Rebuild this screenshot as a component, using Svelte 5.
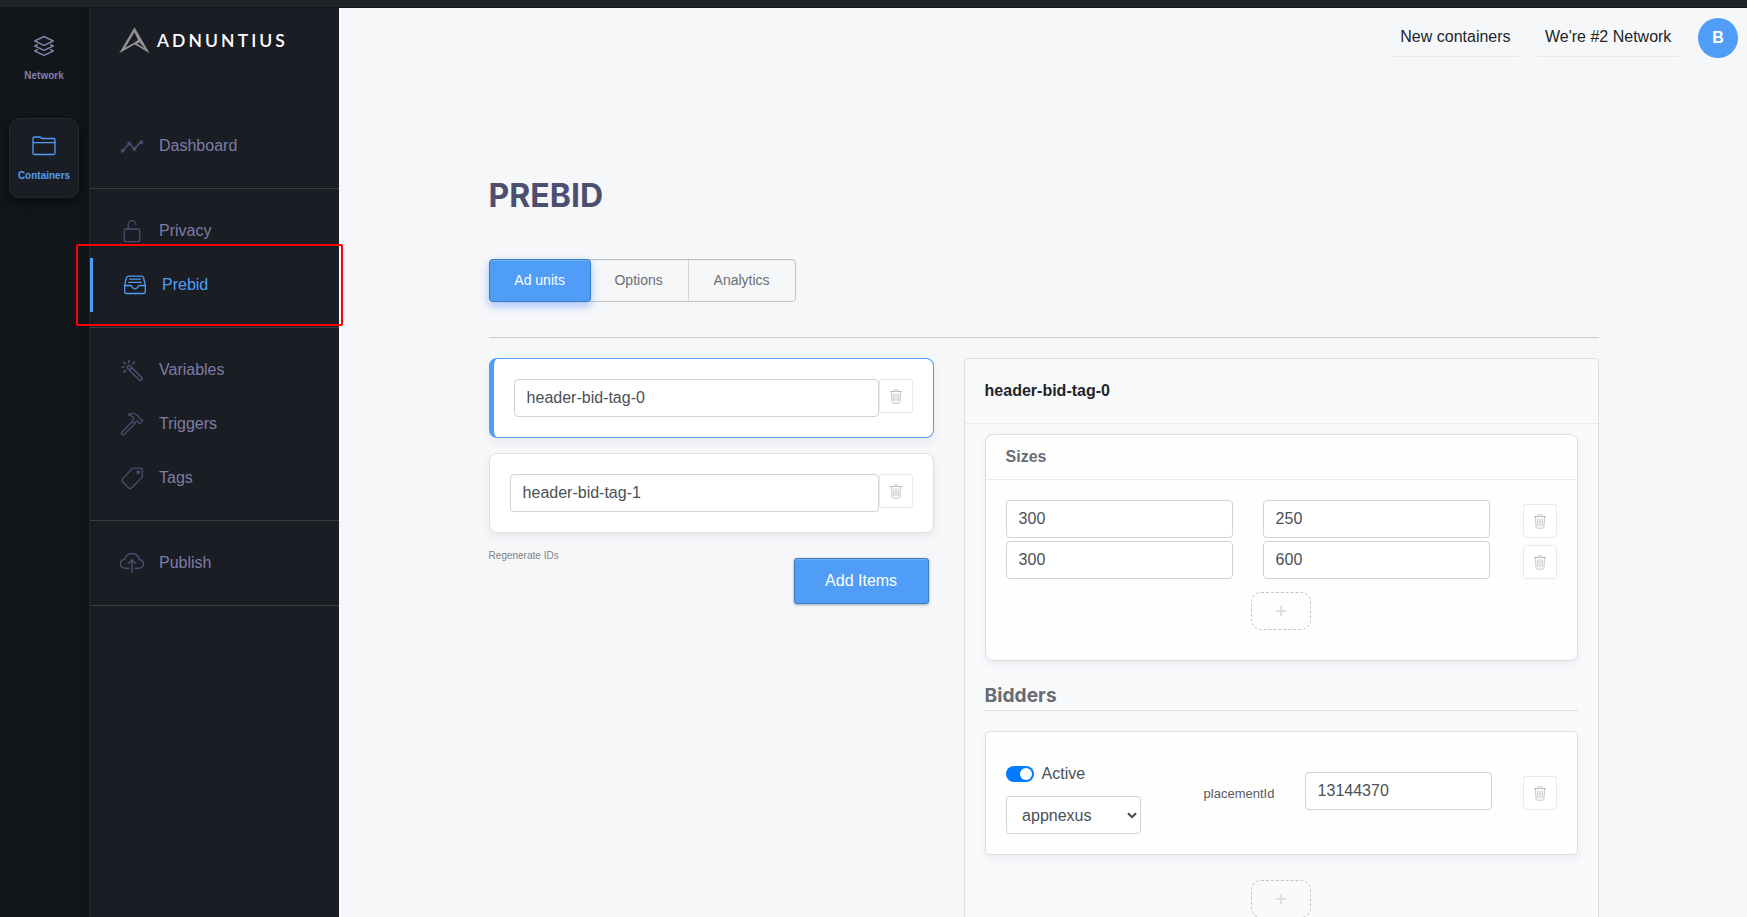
<script>
  const sections = [
    [{ label: 'Dashboard', icon: 'chart' }],
    [{ label: 'Privacy', icon: 'lock' }, { label: 'Prebid', icon: 'inbox', active: true }],
    [{ label: 'Variables', icon: 'wand' }, { label: 'Triggers', icon: 'hammer' }, { label: 'Tags', icon: 'tag' }],
    [{ label: 'Publish', icon: 'cloud' }]
  ];
  const units = [
    { name: 'header-bid-tag-0', selected: true },
    { name: 'header-bid-tag-1', selected: false }
  ];
  const sizes = [[300, 250], [300, 600]];
</script>

{#snippet trash()}
  <button class="trash" aria-label="Delete">
    <svg width="12" height="15" viewBox="0 0 12 15" fill="none">
      <path d="M0 2.5h12" stroke="#b9bbbf" />
      <path d="M3.6 2.3C3.8 1 4.3.6 5 .6h2c.7 0 1.200.4 1.400 1.700" stroke="#c3c5c8" />
      <path d="M1.500 3l.5 9.700c.1 1 .6 1.500 1.500 1.500h5c.9 0 1.400-.5 1.500-1.500l.5-9.700" stroke="#c3c5c8" />
      <path d="M3.500 4.500v7.800M5.200 4.500v7.800M6.800 4.500v7.800M8.500 4.500v7.800" stroke="#cfd0d3" />
    </svg>
  </button>
{/snippet}

{#snippet plus()}
  <button class="plus" aria-label="Add">
    <svg width="10" height="10" viewBox="0 0 10 10"><path d="M0 5h10M5 0v10" stroke="#dedfe1" stroke-width="2" /></svg>
  </button>
{/snippet}

{#snippet icon(name)}
  <svg class="icon" width="24" height="24" viewBox="0 0 24 24" fill="none" stroke="currentColor" stroke-width="1.300" stroke-linejoin="round" stroke-linecap="round">
    {#if name === 'chart'}
      <g stroke-width="1.600"><path d="M3.700 15.700 8.300 10.500M10.200 10.300l3.200 3.800M15.400 13.800l4.900-5.400" />
      <circle cx="2.700" cy="16.700" r="1.200" /><circle cx="9.300" cy="9.600" r="1.200" /><circle cx="14.400" cy="14.900" r="1.200" /><circle cx="21.300" cy="8.200" r="1.200" /></g>
    {:else if name === 'lock'}
      <rect x="4.200" y="10" width="15.600" height="12.600" rx="2" />
      <path d="M8.200 10V5.600a3.900 3.900 0 0 1 7.800 0" />
    {:else if name === 'inbox'}
      <g transform="translate(0 -.5)"><path d="M1.700 12.500 3.500 5.200C3.800 4 4.300 3.600 5.500 3.600h13c1.200 0 1.700.4 2 1.600l1.800 7.300v6.800c0 1-.7 1.700-1.700 1.700H3.400c-1 0-1.700-.7-1.700-1.700z" />
      <path d="M1.700 13h5.800c.8 0 1.200.5 1.500 1.300.5 1.200 1.500 2 3 2s2.500-.8 3-2c.3-.8.7-1.300 1.500-1.300h5.800M6.500 6.700h11M5.700 9.800h12.600" /></g>
    {:else if name === 'wand'}
      <path d="M7.800 10.500a1.700 1.700 0 0 1 2.400-2.400L21.500 19.300a1.700 1.700 0 0 1-2.500 2.500zM11.800 9.800l-2.300 2.300" stroke-width="1.500" />
      <path d="M9 2.200v2.500M3.900 4.100l1.600 1.600M14.400 3.900l-1.800 1.800M1.800 9h2.700M5.500 12.600l-1.500 1.500" stroke-width="1.600" />
    {:else if name === 'hammer'}
      <path d="M12.500 9.500 1.700 20.300c-.5.500-.5 1 0 1.400l.9.900c.4.400.9.400 1.400 0L15 11.800" />
      <path d="M8.200 2.600c3.500-1.800 7.300-1.100 9.500 1.100l1.300 1.300c.6.700.4 1.600 1 2.100s1.200.1 1.600.4l1.200 1.100-2.900 3.300-1.400-1.100c-.4-.4-.1-1.100-.7-1.500-.7-.4-1.400-.1-2 .4l-1.500 1.700-2.200-2.100 1.300-1.500c.9-1.600-1.300-4.600-5.200-5.200z" />
    {:else if name === 'tag'}
      <path d="M13.200 2.100h8c.7 0 1 .3 1 1v7.500c0 .6-.1.900-.5 1.300L11 22.200c-.7.600-1.200.6-1.800 0l-7-7c-.6-.6-.6-1.200 0-1.800L12 2.700c.3-.4.700-.6 1.200-.6z" />
      <circle cx="18.200" cy="6.200" r="1.200" fill="currentColor" />
    {:else}
      <path d="M9 17.200H5A4.300 4.300 0 0 1 4.600 8.400C5.600 4.500 8.500 2.400 12 2.400c3.700 0 6.500 2.400 7 6.200 2.500.3 4.300 1.900 4.300 4.300 0 2.500-1.900 4.300-4.300 4.300h-4M12 21.600V9.200M8.500 12.300 12 8.800l3.500 3.500" stroke-width="1.500" />
    {/if}
  </svg>
{/snippet}

<div class="screen">
  <div class="topbar"></div>
  <div class="layout">
    <aside class="rail">
      <div class="rail-item">
        <svg width="22" height="22" viewBox="0 0 22 22" fill="none" stroke="currentColor" stroke-width="1.400" stroke-linejoin="round">
          <path d="M11 1.500 20.300 6 11 10.400 1.700 6z" />
          <path d="M4.800 9.500 1.700 11 11 15.300 20.300 11l-3.100-1.500M4.800 14.500 1.700 16 11 20.300 20.300 16l-3.100-1.500" />
        </svg>
        <span>Network</span>
      </div>
      <div class="rail-item current">
        <svg width="24" height="22" viewBox="0 0 24 22" fill="none" stroke="currentColor" stroke-width="1.300" stroke-linejoin="round">
          <path d="M1 18V3.500C1 2.300 1.500 2 2.500 2h5c1.500 0 1.300 1.500 3 1.500h11c1 0 1.500.5 1.500 1.500v13c0 1-.5 1.500-1.500 1.500h-19C1.500 19.500 1 19 1 18zM1 7.700h22" />
        </svg>
        <span>Containers</span>
      </div>
    </aside>

    <nav class="sidebar">
      <div class="brand">
        <svg width="32" height="28" viewBox="0 0 32 28" fill="#929292">
          <path fill-rule="evenodd" d="M15.500.3 30.600 26.300 19 19.300 15.400 17.600.2 26.300zM15.400 5.200 6.200 20.700l9.700-5.400 3-2.200zM20.400 15.200l-2.200 1.600 2.100 1.200 5.300 3.200z" />
        </svg>
        <span>ADNUNTIUS</span>
      </div>
      <div class="menu">
        {#each sections as items}
          <div class="group">
            {#each items as item}
              <div class="item" class:active={item.active}>
                {@render icon(item.icon)}
                <span>{item.label}</span>
              </div>
            {/each}
          </div>
        {/each}
      </div>
    </nav>

    <main>
      <header>
        <span class="crumb first">New containers</span>
        <span class="crumb second">We're #2 Network</span>
        <span class="avatar">B</span>
      </header>
      <div class="content">
        <h1>PREBID</h1>
        <div class="tabs">
          <button class="tab on">Ad units</button>
          <button class="tab options">Options</button>
          <button class="tab analytics">Analytics</button>
        </div>
        <hr />
        <div class="columns">
          <section class="units">
            {#each units as unit}
              <div class="unit" class:selected={unit.selected}>
                <input value={unit.name} />
                {@render trash()}
              </div>
            {/each}
            <div class="unit-actions">
              <span class="regen">Regenerate IDs</span>
              <button class="add">Add Items</button>
            </div>
          </section>

          <section class="panel">
            <div class="panel-head">header-bid-tag-0</div>
            <div class="panel-body">
              <div class="card sizes">
                <div class="card-head">Sizes</div>
                <div class="card-body">
                  {#each sizes as [w, h]}
                    <div class="size-row">
                      <input value={w} />
                      <input value={h} />
                      {@render trash()}
                    </div>
                  {/each}
                  <div class="plus-row in-card">{@render plus()}</div>
                </div>
              </div>
              <h2>Bidders</h2>
              <div class="card bidder">
                <div class="bidder-left">
                  <div class="switch"><i></i><span>Active</span></div>
                  <div class="select">
                    <span>appnexus</span>
                    <svg width="10" height="7" viewBox="0 0 10 7" fill="none" stroke="#41464c" stroke-width="2"><path d="M1 1.200l4 4 4-4" /></svg>
                  </div>
                </div>
                <span class="param">placementId</span>
                <input class="placement" value="13144370" />
                {@render trash()}
              </div>
              <div class="plus-row">{@render plus()}</div>
            </div>
          </section>
        </div>
      </div>
    </main>
  </div>
  <div class="highlight"></div>
</div>

<style>
  :global(body) { margin: 0; overflow: hidden; }
  .screen, .screen * { box-sizing: border-box; }
  .screen {
    position: relative;
    display: flex;
    flex-direction: column;
    height: 917px;
    overflow: hidden;
    background: #f6f7f9;
    color: #212529;
    font: 16px/24px "Liberation Sans", Arial, sans-serif;
  }
  button, input { font: inherit; margin: 0; }
  svg { display: block; flex: none; }

  .topbar { height: 8px; flex: none; background: #212427; border-bottom: 1px solid #17181b; }
  .layout { display: flex; flex: 1; min-height: 0; }

  .rail {
    width: 90px;
    flex: none;
    padding: 10px 10px 0 9px;
    background: linear-gradient(90deg, #121519, #13161a 80%, #111317);
    border-right: 1px solid #24272b;
  }
  .rail-item {
    display: flex;
    flex-direction: column;
    align-items: center;
    width: 70px;
    height: 80px;
    padding-top: 16px;
    color: #8180aa;
    font-size: 10px;
    font-weight: 700;
    line-height: 12px;
    border: 1px solid transparent;
    border-radius: 10px;
  }
  .rail-item span { margin-top: 13px; }
  .rail-item.current {
    margin-top: 20px;
    color: #4f9df6;
    background: #1b1d24;
    border-color: #26282d;
    box-shadow: 0 4px 12px rgba(0, 0, 0, .5);
  }

  .sidebar { width: 249px; flex: none; background: #1b1d24; }
  .brand { display: flex; align-items: center; height: 111px; padding: 0 0 45px 29px; }
  .brand span {
    margin-left: 6px;
    color: #fff;
    font: 600 17.500px/24px Lato, sans-serif;
    letter-spacing: 3.100px;
  }
  .group { padding-bottom: 15px; border-bottom: 1px solid #3b3d42; }
  .group + .group { padding-top: 15px; }
  .item { display: flex; align-items: center; height: 54px; padding-left: 30px; color: #7d7ca6; }
  .item .icon { color: #4d4c6e; }
  .item span { margin-left: 15px; }
  .item.active { color: #4f9df6; border-left: 3px solid #4f9df6; }
  .item.active .icon { color: #4f9df6; }

  main { flex: 1; min-width: 0; }
  header { display: flex; justify-content: flex-end; height: 82px; padding: 8px 9px 0 0; }
  .crumb { height: 41px; padding-top: 9px; border-bottom: 1px solid #e6e7ed; white-space: nowrap; }
  .first { width: 125px; padding-left: 7.300px; margin-right: 20px; }
  .second { width: 140px; padding-left: 7px; margin-right: 20px; }
  .avatar {
    display: flex;
    align-items: center;
    justify-content: center;
    width: 40px;
    height: 40px;
    margin-top: 2px;
    border-radius: 50%;
    background: #4f9df6;
    color: #fff;
    font-weight: 700;
  }
  .content { width: 1110px; margin-left: 149.600px; }
  h1 { margin: 0; padding-top: 86px; height: 169px; color: #4d4e70; font: 700 32px/40px Inter, sans-serif; }

  .tabs { display: flex; width: 307px; height: 43px; border: 1px solid #c0c3c5; border-radius: 4px; box-shadow: inset 0 1px 1px rgba(0, 0, 0, .04); }
  .tab { padding: 0 0 2px; border: 0; background: none; color: #6b6e72; font-size: 14px; }
  .tab.on {
    width: 102px;
    margin: -1px 0 -1px -1px;
    color: #fff;
    background: #4f9df6;
    border: 1px solid #3a7cc4;
    border-radius: 4px;
    box-shadow: inset 0 1px 0 #76b2f8, 0 4px 10px rgba(79, 140, 246, .5);
  }
  .options { width: 98px; padding-right: 1px; border-right: 1px solid #d4d6d8; }
  .analytics { flex: 1; }
  hr { margin: 35px 0 20px; border: 0; border-top: 1px solid #cfd1d3; }

  .columns { display: flex; gap: 30px; }
  .units { width: 445px; }
  .unit {
    display: flex;
    height: 80px;
    margin-bottom: 15px;
    padding: 20px 20px 0;
    background: #fff;
    border: 1px solid #dfe0e2;
    border-radius: 8px;
    box-shadow: 0 4px 8px rgba(30, 50, 80, .07);
  }
  .unit.selected { border: 1px solid #4f9df6; border-left-width: 5px; }
  input {
    flex: 1;
    min-width: 0;
    height: 38px;
    padding: 0 12px;
    color: #495057;
    background: #fff;
    border: 1px solid #ced4da;
    border-radius: 4px;
    outline: 0;
  }
  .trash {
    display: flex;
    flex: none;
    align-items: center;
    justify-content: center;
    width: 34px;
    height: 34px;
    padding: 0;
    background: #fff;
    border: 1px solid #e6eaf1;
    border-radius: 3px;
  }
  .unit-actions { display: flex; justify-content: space-between; padding-right: 5px; }
  .regen { padding-top: 1px; color: #808387; font-size: 10px; line-height: 14px; }
  .add {
    width: 135px;
    height: 46px;
    margin-top: 10px;
    padding: 0;
    color: #fff;
    background: #4f9df6;
    border: 1px solid #3a7cc4;
    border-radius: 3px;
    box-shadow: inset 0 1px 0 #76b2f8, 0 1px 3px rgba(0, 0, 0, .35);
  }

  .panel { width: 635px; height: 600px; background: #f9fafc; border: 1px solid #dcdfe2; border-radius: 4px; }
  .panel-head { height: 65px; padding: 20px 20px 0; font-weight: 700; border-bottom: 1px solid #e9ebee; }
  .panel-body { padding: 10px 20px 0; }
  .card { background: #fefefe; border: 1px solid #dcdfe2; border-radius: 8px; box-shadow: 0 4px 8px rgba(30, 50, 80, .07); }
  .sizes { height: 227px; }
  .card-head { height: 45px; padding: 10px 20px 0; color: #6a6d72; font-weight: 700; border-bottom: 1px solid #e9ebee; }
  .card-body { padding: 20px 20px 0; }
  .size-row { display: grid; grid-template-columns: 227px 227px 34px; column-gap: 30px; align-items: end; margin-bottom: 3px; }
  .size-row :global(.trash) { margin-left: 3px; }
  .plus-row { display: flex; justify-content: center; padding-top: 25px; padding-right: 1px; }
  .plus-row.in-card { padding-top: 10px; }
  .plus {
    display: flex;
    align-items: center;
    justify-content: center;
    width: 60px;
    height: 38px;
    padding: 0;
    background: none;
    border: 1px dashed #c3c5c8;
    border-radius: 10px;
  }
  h2 { margin: 19px 0 20px; height: 31px; color: #696c70; font: 700 19.200px/31px Inter, sans-serif; border-bottom: 1px solid #dcdfe2; }
  .bidder { display: flex; height: 124px; padding-left: 20px; border-radius: 5px; }
  .bidder-left { width: 135px; padding-top: 30px; }
  .switch { display: flex; align-items: center; height: 24px; color: #495057; }
  .switch i { display: flex; justify-content: flex-end; width: 28px; height: 16px; margin: 0 8px 0 0; padding: 2px; border-radius: 8px; background: #007bff; }
  .switch i::before { content: ""; width: 12px; height: 12px; border-radius: 50%; background: #fff; }
  .select {
    display: flex;
    align-items: center;
    justify-content: space-between;
    height: 38px;
    margin-top: 10px;
    padding: 1px 3px 0 15.500px;
    color: #495057;
    background: #fff;
    border: 1px solid #ced4da;
    border-radius: 4px;
  }
  .param { width: 101px; margin: 50px 0 0 63px; color: #55595e; font-size: 13px; }
  .placement { flex: none; width: 187px; margin-top: 40px; }
  .bidder :global(.trash) { margin: 44px 0 0 31px; }

  .highlight { position: absolute; left: 76px; top: 244px; width: 267px; height: 82px; border: 2px solid #f00; border-radius: 2px; }
</style>
